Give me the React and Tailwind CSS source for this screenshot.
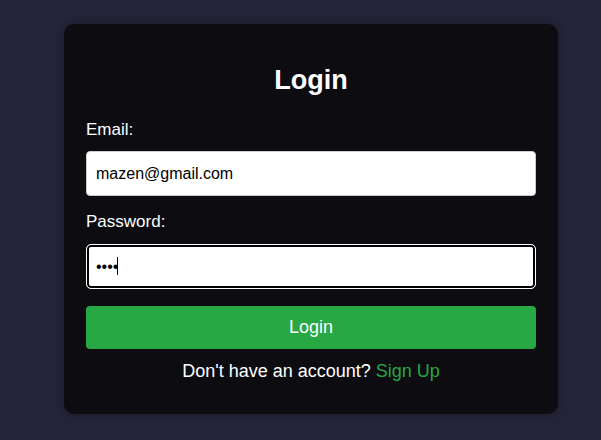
export default function App() {
  return (
    <div
      className="w-[601px] h-[440px] bg-[#25253a] overflow-hidden pt-[24px] pl-[64px]"
      style={{ fontFamily: '"Liberation Sans", Arial, sans-serif' }}
    >
      <div className="w-[494px] h-[390px] bg-[#0c0c11] rounded-[10px] px-[22px] pt-[41px] shadow-[0_0_12px_rgba(0,0,0,0.35)] flex flex-col">
        <h2 className="text-[27px] leading-[30px] font-bold text-white text-center">Login</h2>
        <label className="mt-[26px] text-[17px] leading-[18px] text-white">Email:</label>
        <input
          type="email"
          defaultValue="mazen@gmail.com"
          className="mt-[12px] h-[45px] w-full bg-white rounded-[4px] border border-[#cccccc] px-[9px] text-[16px] text-black outline-none"
        />
        <label className="mt-[17px] text-[17px] leading-[18px] text-white">Password:</label>
        <div className="relative mt-[13px]">
          <input
            type="password"
            defaultValue="abcd"
            className="h-[45px] w-full bg-white rounded-[5px] border border-white shadow-[inset_0_0_0_2px_#000] px-[9px] text-[16px] text-black outline-none"
          />
          <span className="absolute left-[31px] top-[13px] w-[1px] h-[18px] bg-black" />
        </div>
        <button className="mt-[17px] h-[43px] w-full bg-[#28a745] rounded-[4px] text-[18px] text-white">
          Login
        </button>
        <p className="mt-[12px] text-center text-[18px] leading-[20px] text-white">
          Don't have an account? <span className="text-[#28a745]">Sign Up</span>
        </p>
      </div>
    </div>
  );
}
